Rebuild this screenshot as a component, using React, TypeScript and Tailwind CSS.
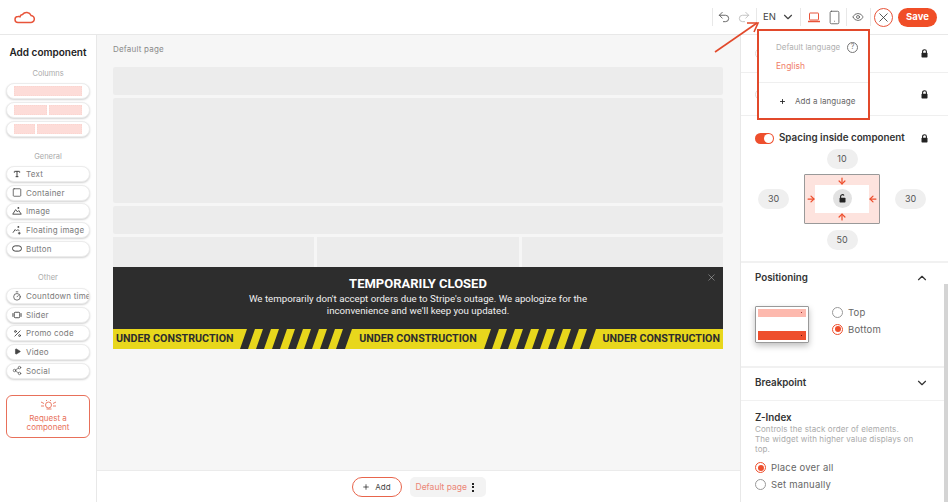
import { ArrowDown, ArrowLeft, ArrowRight, ArrowUp, ChevronDown, ChevronUp, Eye, Percent, Play, Plus, Redo2, Share2, Smartphone, Square, Timer, Type, Undo2, X } from "lucide-react";
import type { ReactNode } from "react";

const font = { fontFamily: "Inter, 'Open Sans', sans-serif" };

function Pill({ children }: { children: ReactNode }) {
  return (
    <div className="flex h-[16px] w-[84px] items-center gap-[4px] overflow-hidden rounded-full border border-[#ececec] bg-white px-[5px] text-[8px] tracking-[0.2px] whitespace-nowrap text-[#7a7a7a] shadow-[0_1px_2px_rgba(0,0,0,0.18)]">
      {children}
    </div>
  );
}

function ColumnPill({ parts }: { parts: string[] }) {
  return (
    <div className="flex h-[16px] w-[84px] items-center gap-[2px] rounded-full border border-[#ececec] bg-white px-[7px] shadow-[0_1px_2px_rgba(0,0,0,0.18)]">
      {parts.map((w, i) => (
        <div key={i} className={`${w} h-[10px] border border-dotted border-[#fbd5d0] bg-[#fddcd8]`} />
      ))}
    </div>
  );
}

function ComponentItem({ icon, label }: { icon: ReactNode; label: string }) {
  return (
    <Pill>
      <span className="flex w-[10px] shrink-0 justify-center text-[#444]">{icon}</span>
      {label}
    </Pill>
  );
}

function MountainIcon({ plus }: { plus?: boolean }) {
  return (
    <svg width="11" height="10" viewBox="0 0 11 10" fill="none" stroke="currentColor" strokeWidth="1">
      <path d={plus ? "M1 8 3.5 4.5 5 6l1.5-1.5L8 6" : "M.8 8.5h9.4L7.5 4.5 6 6 4 3.5Z"} />
      <circle cx="7" cy="1.6" r="1" fill="currentColor" stroke="none" />
      {plus && <path d="M8 7v3M6.5 8.5h3" />}
    </svg>
  );
}

function Sidebar() {
  return (
    <aside className="flex w-[97px] shrink-0 flex-col border-r border-[#e8e8e8] bg-white px-[6px] pt-[10px]">
      <h2 className="text-center text-[10px] font-semibold text-[#222]">Add component</h2>
      <p className="mt-[8px] mb-[4px] text-center text-[7.5px] text-[#aaa]">Columns</p>
      <div className="flex flex-col gap-[2.7px]">
        <ColumnPill parts={["flex-1"]} />
        <ColumnPill parts={["flex-1", "flex-1"]} />
        <ColumnPill parts={["w-[21px]", "flex-1"]} />
      </div>
      <p className="mt-[14px] mb-[4px] text-center text-[7.5px] text-[#aaa]">General</p>
      <div className="flex flex-col gap-[2.7px]">
        <ComponentItem icon={<Type size={8} strokeWidth={3} />} label="Text" />
        <ComponentItem icon={<Square size={11} strokeWidth={1.8} />} label="Container" />
        <ComponentItem icon={<MountainIcon />} label="Image" />
        <ComponentItem icon={<MountainIcon plus />} label="Floating image" />
        <ComponentItem
          icon={
            <svg width="11" height="7" viewBox="0 0 11 7" fill="none" stroke="currentColor" strokeWidth="1.1">
              <rect x="0.6" y="0.6" width="9.8" height="5.8" rx="2.9" />
            </svg>
          }
          label="Button"
        />
      </div>
      <p className="mt-[15px] mb-[5px] text-center text-[7.5px] text-[#aaa]">Other</p>
      <div className="flex flex-col gap-[2.7px]">
        <ComponentItem icon={<Timer size={10} strokeWidth={1.8} />} label="Countdown timer" />
        <ComponentItem
          icon={
            <svg width="11" height="8" viewBox="0 0 11 8" fill="none" stroke="currentColor" strokeWidth="1">
              <rect x="2.5" y="1" width="6" height="6" rx="1" />
              <path d="M1 2v4M10 2v4" />
            </svg>
          }
          label="Slider"
        />
        <ComponentItem icon={<Percent size={9} strokeWidth={2.4} />} label="Promo code" />
        <ComponentItem icon={<Play size={7} fill="currentColor" />} label="Video" />
        <ComponentItem icon={<Share2 size={11} strokeWidth={1.5} />} label="Social" />
      </div>
      <div className="mt-[16px] flex h-[43px] w-[84px] flex-col items-center justify-center rounded-[6px] border-[1.5px] border-[#e8705a] text-center text-[8px] leading-[9.5px] text-[#e8705a]">
        <svg width="17" height="11" viewBox="0 0 17 11" fill="none" stroke="currentColor" strokeWidth="0.9" className="mb-[3px]">
          <circle cx="8.5" cy="5" r="3" />
          <path d="M6.5 9h5M1 2l3 1.5M1 6h3M16 2l-3 1.5M16 6h-3M7 1 6 0M10 1l1-1" />
        </svg>
        <span>Request a</span>
        <span>component</span>
      </div>
    </aside>
  );
}

function HazardStripes() {
  const tops = [15, 31, 47, 63, 79, 95];
  return (
    <svg width="112" height="20" viewBox="0 0 112 20" className="shrink-0">
      <polygon points="0,0 7,0 0,20" fill="#e8d71c" />
      {tops.map((x) => (
        <polygon key={x} points={`${x},0 ${x + 8},0 ${x + 1},20 ${x - 7},20`} fill="#e8d71c" />
      ))}
      <polygon points="105,20 112,0 112,20" fill="#e8d71c" />
    </svg>
  );
}

function ConstructionLabel() {
  return <span className="shrink-0 px-[3px] text-[10.7px] font-bold whitespace-nowrap text-[#2d2d2d]">UNDER CONSTRUCTION</span>;
}

function Banner() {
  return (
    <div className="absolute top-[232px] right-[17px] left-[16px] bg-[#2d2d2d]" style={{ fontFamily: "Roboto, sans-serif" }}>
      <X size={11} strokeWidth={1} className="absolute top-[5px] right-[6px] text-[#cfcfcf]" />
      <div className="flex h-[62px] flex-col items-center pt-[9px] text-center text-white">
        <p className="text-[13px] leading-[15px] font-bold">TEMPORARILY CLOSED</p>
        <p className="mt-[2px] w-[345px] text-[9.7px] leading-[12px] text-[#f0f0f0]">
          We temporarily don't accept orders due to Stripe's outage. We apologize for the inconvenience and we'll keep you updated.
        </p>
      </div>
      <div className="flex h-[20px] items-center justify-between overflow-hidden bg-[#e8d71c]">
        <ConstructionLabel />
        <div className="bg-[#2d2d2d] leading-[0]">
          <HazardStripes />
        </div>
        <ConstructionLabel />
        <div className="bg-[#2d2d2d] leading-[0]">
          <HazardStripes />
        </div>
        <ConstructionLabel />
      </div>
    </div>
  );
}

function Canvas() {
  return (
    <main className="relative flex min-w-0 flex-1 flex-col bg-[#f6f6f6]">
      <div className="flex-1 pr-[17px] pl-[16px]">
        <p className="pt-[9px] text-[8px] leading-[10px] tracking-[0.2px] text-[#8a8a8a]">Default page</p>
        <div className="mt-[13px] flex flex-col gap-[3px]">
          <div className="h-[28px] rounded-[2px] bg-[#ececec]" />
          <div className="h-[105px] rounded-[2px] bg-[#ececec]" />
          <div className="h-[28px] rounded-[2px] bg-[#ececec]" />
          <div className="grid h-[30px] grid-cols-3 gap-[3px]">
            <div className="bg-[#ececec]" />
            <div className="bg-[#ececec]" />
            <div className="bg-[#ececec]" />
          </div>
        </div>
      </div>
      <Banner />
      <div className="flex h-[32px] items-center justify-center gap-[8px] border-t border-[#ebebeb] bg-white pt-[1px]">
        <div className="flex h-[20px] w-[50px] items-center justify-center gap-[5px] rounded-full border border-[#e8654c] text-[8px] text-[#444]">
          <Plus size={8} strokeWidth={2.2} className="text-[#222]" />
          Add
        </div>
        <div className="flex h-[20px] w-[76px] items-center gap-[5px] rounded-[5px] bg-[#f3f3f3] pl-[6px] text-[8.5px] text-[#ec8676]">
          Default page
          <span className="flex flex-col gap-[1.5px]">
            <i className="block h-[2px] w-[2px] bg-[#222]" />
            <i className="block h-[2px] w-[2px] bg-[#222]" />
            <i className="block h-[2px] w-[2px] bg-[#222]" />
          </span>
        </div>
      </div>
    </main>
  );
}

function Radio({ checked, label }: { checked?: boolean; label: string }) {
  return (
    <div className="flex items-center gap-[5px] text-[9.5px] leading-[17px] tracking-[0.2px] text-[#666]">
      <span className={`flex h-[11px] w-[11px] items-center justify-center rounded-full border ${checked ? "border-[#ee4f2d]" : "border-[#999]"}`}>
        {checked && <span className="h-[6px] w-[6px] rounded-full bg-[#ee4f2d]" />}
      </span>
      {label}
    </div>
  );
}

function SpacingValue({ children }: { children: ReactNode }) {
  return <div className="flex h-[20px] w-[31px] items-center justify-center rounded-full bg-[#efefef] text-[9px] text-[#555]">{children}</div>;
}

function PadLock({ open }: { open?: boolean }) {
  return (
    <svg width="7" height="9" viewBox="0 0 7 9" className="text-[#222]">
      <path d={open ? "M1.6 4V2.4a1.8 1.8 0 0 1 3.4-.8" : "M1.6 4V2.6a1.9 1.9 0 0 1 3.8 0V4"} fill="none" stroke="currentColor" strokeWidth="1.1" />
      <rect x="0.5" y="3.8" width="6" height="4.7" rx="0.7" fill="currentColor" />
    </svg>
  );
}

function SpacingBox() {
  return (
    <div className="relative flex h-[50px] w-[76px] items-center justify-center rounded-[1px] border border-[#999] bg-[#fde3de]">
      <div className="flex h-[28px] w-[54px] items-center justify-center bg-white">
        <div className="flex h-[19px] w-[19px] items-center justify-center rounded-full bg-[#e2e2e2]">
          <PadLock open />
        </div>
      </div>
      <ArrowDown size={10} strokeWidth={3} className="absolute top-[1px] left-[32px] text-[#ee4f2d]" />
      <ArrowUp size={10} strokeWidth={3} className="absolute bottom-[1px] left-[32px] text-[#ee4f2d]" />
      <ArrowRight size={10} strokeWidth={3} className="absolute top-[19px] left-[1px] text-[#ee4f2d]" />
      <ArrowLeft size={10} strokeWidth={3} className="absolute top-[19px] right-[1px] text-[#ee4f2d]" />
    </div>
  );
}

function LockedRow({ height }: { height: string }) {
  return (
    <div className={`${height} flex items-center justify-between border-b border-[#efefef] pr-[20px] pl-[14px]`}>
      <span className="h-[11px] w-[19px] rounded-full border border-[#ddd]" />
      <PadLock />
    </div>
  );
}

function SettingsPanel() {
  return (
    <aside className="relative w-[208px] shrink-0 overflow-hidden border-l border-[#e8e8e8] bg-white">
      <div className="absolute top-[249px] right-0 bottom-0 w-[4px] bg-[#d4d4d4]" />
      <LockedRow height="h-[38px]" />
      <LockedRow height="h-[43px]" />
      <section className="h-[147px] border-b-[2px] border-[#f1f1f1] pt-[15px]">
        <div className="flex items-center pr-[20px] pl-[14px]">
          <span className="flex h-[11px] w-[19px] items-center justify-end rounded-full bg-[#ee4f2d] pr-[1px]">
            <span className="h-[9px] w-[9px] rounded-full bg-white" />
          </span>
          <span className="ml-[5px] flex-1 text-[9.8px] font-semibold text-[#333]">Spacing inside component</span>
          <PadLock />
        </div>
        <div className="mt-[3px] flex flex-col items-center pr-[5px]">
          <SpacingValue>10</SpacingValue>
          <div className="mt-[5px] mb-[6px] flex items-center gap-[15px]">
            <SpacingValue>30</SpacingValue>
            <SpacingBox />
            <SpacingValue>30</SpacingValue>
          </div>
          <SpacingValue>50</SpacingValue>
        </div>
      </section>
      <section className="h-[105px] border-b-[2px] border-[#f1f1f1] px-[14px] pt-[8px]">
        <div className="flex items-center justify-between pr-[5px]">
          <h3 className="text-[9.8px] font-semibold text-[#333]">Positioning</h3>
          <ChevronUp size={14} strokeWidth={2} className="text-[#333]" />
        </div>
        <div className="mt-[20px] flex items-start gap-[23px]">
          <div className="flex h-[37px] w-[54px] flex-col justify-between rounded-[1px] border border-[#999] p-[2px] shadow-[0_3px_6px_rgba(0,0,0,0.25)]">
            <div className="flex h-[8px] items-center justify-end bg-[#fdb9ae] pr-[4px]">
              <i className="block h-[1px] w-[1px] bg-[#a33]" />
            </div>
            <div className="flex h-[9px] items-center justify-end bg-[#ee4f2d] pr-[4px]">
              <i className="block h-[1px] w-[1px] bg-[#611]" />
            </div>
          </div>
          <div className="-mt-[2px] flex flex-col">
            <Radio label="Top" />
            <Radio checked label="Bottom" />
          </div>
        </div>
      </section>
      <section className="flex h-[33px] items-center justify-between border-b border-[#f1f1f1] pr-[19px] pb-[2px] pl-[14px]">
        <h3 className="text-[9.8px] font-semibold text-[#333]">Breakpoint</h3>
        <ChevronDown size={14} strokeWidth={2} className="text-[#333]" />
      </section>
      <section className="px-[14px] pt-[11px]">
        <h3 className="text-[9.8px] leading-[12px] font-semibold text-[#333]">Z-Index</h3>
        <p className="text-[8px] leading-[10px] tracking-[0.1px] text-[#aaa]">
          Controls the stack order of elements.
          <br />
          The widget with higher value displays on
          <br />
          top.
        </p>
        <div className="mt-[5px] flex flex-col">
          <Radio checked label="Place over all" />
          <Radio label="Set manually" />
        </div>
      </section>
    </aside>
  );
}

function Header() {
  return (
    <header className="flex h-[35px] shrink-0 items-center border-b border-[#e8e8e8] bg-white pr-[11px] pl-[14px]">
      <svg width="21" height="13" viewBox="0 0 21 12" fill="none" stroke="#e8543a" strokeWidth="1.5">
        <path d="M4 11h12.5a3.5 3.5 0 0 0 .6-7A5 5 0 0 0 8.5 3 3 3 0 0 0 6 5.2 3 3 0 0 0 4 5a3 3 0 0 0 0 6Z" />
      </svg>
      <div className="ml-auto flex items-center text-[#555]">
        <div className="flex h-[18px] w-[44px] items-center gap-[6px] border-l border-[#e8e8e8] pl-[4px]">
          <Undo2 size={14} strokeWidth={1.5} />
          <Redo2 size={14} strokeWidth={1.5} className="text-[#bbb]" />
        </div>
        <div className="flex h-[18px] w-[44px] items-center gap-[5px] border-l border-[#e8e8e8] pl-[6px] text-[9.5px] text-[#444]">
          EN
          <ChevronDown size={14} strokeWidth={2} />
        </div>
        <div className="flex h-[18px] w-[46px] items-center gap-[6px] border-l border-[#e8e8e8] pl-[6px]">
          <svg width="14" height="11" viewBox="0 0 13 11" fill="none" stroke="#e8543a" strokeWidth="1">
            <rect x="2" y="1" width="9" height="7" rx="0.5" />
            <path d="M0.5 9.5h12" strokeWidth="1.5" />
          </svg>
          <Smartphone size={15} strokeWidth={1.3} />
        </div>
        <div className="flex h-[18px] w-[25px] items-center justify-center border-x border-[#e8e8e8] pr-[2px]">
          <Eye size={12} strokeWidth={1.6} />
        </div>
        <div className="ml-[3px] flex h-[19px] w-[19px] items-center justify-center rounded-full border border-[#e8543a] text-[#333]">
          <X size={15} strokeWidth={1.3} />
        </div>
        <div className="ml-[5px] flex h-[19px] w-[39px] items-center justify-center rounded-full bg-[#f04e27] text-[9.5px] font-bold text-white">Save</div>
      </div>
    </header>
  );
}

function LanguageMenu() {
  return (
    <div className="absolute top-[29px] left-[757px] h-[91px] w-[113px] border-[2px] border-[#e2492b] bg-white">
      <div className="flex items-center justify-between pt-[10px] pr-[10px] pl-[17px]">
        <span className="text-[8px] text-[#b0b0b0]">Default language</span>
        <span className="flex h-[11px] w-[11px] items-center justify-center rounded-full border border-[#777] text-[7px] text-[#777]">?</span>
      </div>
      <p className="mt-[8px] pl-[17px] text-[8.5px] leading-[10px] text-[#ef7d69]">English</p>
      <div className="mt-[11px] flex items-center gap-[9px] border-t border-[#efefef] pt-[13px] pl-[20px] text-[8px] leading-[10px] tracking-[0.1px] text-[#666]">
        <Plus size={7} strokeWidth={3} className="text-[#222]" />
        Add a language
      </div>
    </div>
  );
}

export default function App() {
  return (
    <div className="relative flex h-[502px] w-[948px] flex-col overflow-hidden bg-white" style={font}>
      <Header />
      <div className="flex min-h-0 flex-1">
        <Sidebar />
        <Canvas />
        <SettingsPanel />
      </div>
      <LanguageMenu />
      {/* red annotation arrow */}
      <svg width="50" height="40" viewBox="0 0 50 40" fill="none" stroke="#e2492b" strokeWidth="1.6" className="absolute top-[16px] left-[712px]">
        <path d="M3 36 45 7" />
        <path d="M35 7h11l-4 9" />
      </svg>
    </div>
  );
}
